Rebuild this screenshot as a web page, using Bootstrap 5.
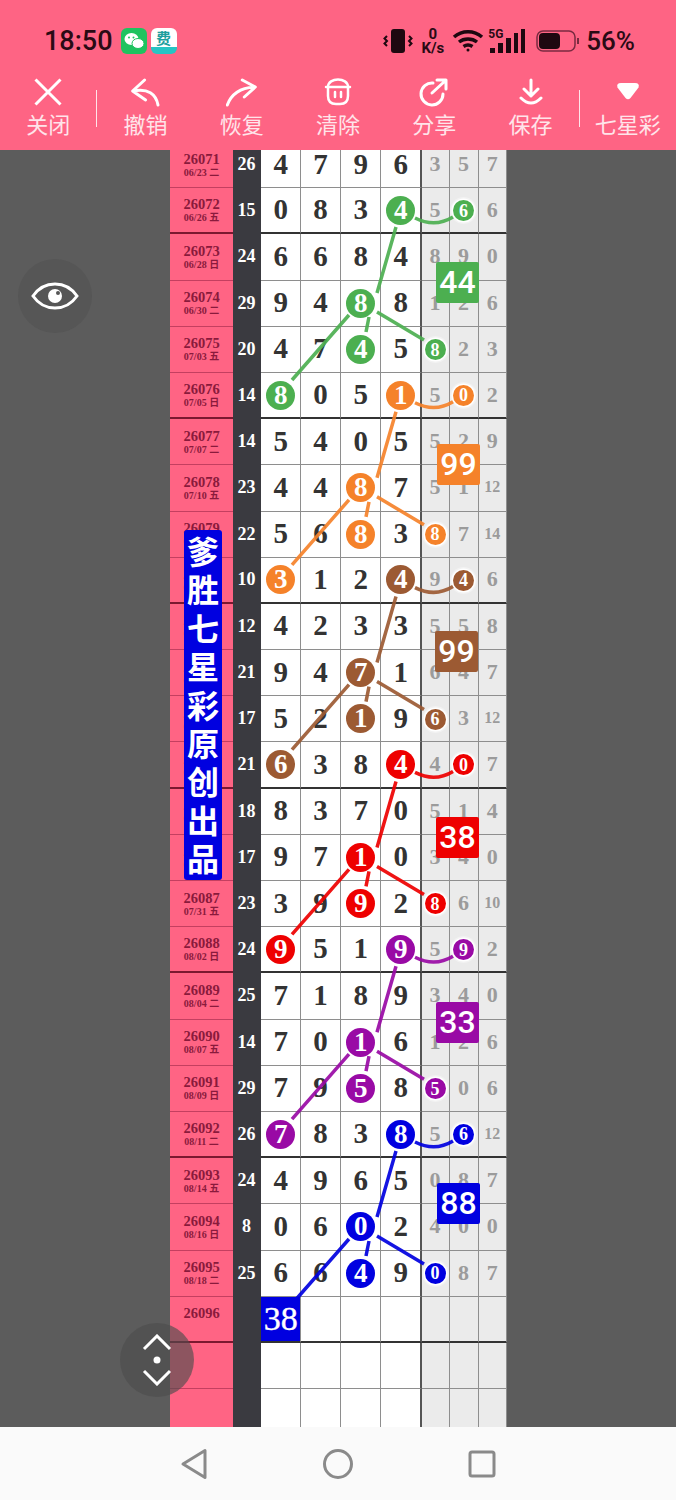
<!DOCTYPE html>
<html lang="zh">
<head>
<meta charset="utf-8">
<title>七星彩</title>
<link href="https://cdn.jsdelivr.net/npm/bootstrap@5.3.0/dist/css/bootstrap.min.css" rel="stylesheet">
<style>
body{background:#5c5c5c;font-family:"Liberation Serif","Noto Sans CJK SC",serif}
.app-shell{height:1500px;overflow:hidden}
.app-head{background:#fe6484;height:150px;font-family:Roboto,"Noto Sans CJK SC",sans-serif}
.status-row{height:72px;padding:10px 41px 0 44px;color:#2a0a14}
.clock{font-size:27px;font-weight:500;line-height:1}
.pct{font-size:26px;font-weight:500;line-height:1;margin-left:6px}
.app-chip{width:26px;height:26px;border-radius:6px;overflow:hidden}
.chip-wx{background:#1fc35f}
.chip-fee{background:linear-gradient(#fff 0,#fff 72%,#27c4c4 72%);color:#1f9e9e;font:700 15px/20px "Noto Sans CJK SC",sans-serif;text-align:center}
.net-rate{font-size:15px;font-weight:700;line-height:14px;text-align:center}
.sig-5g{font-size:12px;font-weight:700;line-height:1}
.batt{margin-left:10px}
.tool-item{flex:1 1 0;color:#ffe4ea;font-size:22px;line-height:28px;min-width:0}
.tool-item svg{display:block;margin-top:4px;margin-bottom:4px}
.tool-sep{width:1px;height:37px;background:#ffe4ea;margin-top:18px}
.draw-wrap{width:337px;margin-top:-8px;margin-left:170px}
.draw-table.table{--bs-table-bg:#fff;table-layout:fixed;width:337px;border-collapse:separate;border-spacing:0}
.draw-table.table>tbody>tr>*{height:46.2px;padding:0 0 1px;text-align:center;vertical-align:middle;border:0;border-bottom:1px solid #8e8e8e;border-right:1px solid #8e8e8e;background:#fff;box-shadow:none;color:#333;font-weight:700;font-size:29px;line-height:1}
.draw-table.table>tbody>tr>td:nth-child(n+3):nth-child(-n+6){padding-left:1px}
.draw-table.table>tbody>tr>th{background:#ff6484;border-bottom-color:#c43f60;border-right:0;color:#8a1a3c;font-size:14.5px;line-height:14px;padding:1px 0 0}
.draw-table.table>tbody>tr>th small{display:block;font-size:10px;line-height:12px;margin-top:1px;color:#8a1a3c}
.draw-table.table>tbody>tr>td:nth-child(2){background:#3a3a40;border-color:#3a3a40;color:#fff;font-size:18px}
.draw-table.table>tbody>tr>td:nth-child(6){border-right:2px solid #555}
.draw-table.table>tbody>tr>td:nth-child(n+7){background:#ebebeb;color:#9b9b9b;font-size:22px;border-right:1px solid #8e8e8e}
.draw-table.table>tbody>tr.grp-end>*{border-bottom:2px solid #333}
.draw-table.table>tbody>tr.grp-end>th{border-bottom-color:#7c1830}
.draw-table.table>tbody>tr.grp-end>td:nth-child(2){border-bottom-color:#3a3a40}
.draw-table.table>tbody>tr>td.nw{font-size:16px}
.draw-table.table>tbody>tr>td.hit{background:#0000e0;color:#fff;font-weight:400;font-size:34px;padding:0;-webkit-text-stroke:.4px #fff}
.orb{display:inline-flex;align-items:center;justify-content:center;width:29px;height:29px;border-radius:50%;background:var(--c);color:#fff;font-size:27px;box-shadow:0 0 0 1.5px #fff,0 0 0 3px rgba(255,255,255,.35)}
.orb-sm{width:21px;height:21px;font-size:18px}
.tone-g{--c:#4caf50}.tone-o{--c:#f5822a}.tone-b{--c:#9c5a33}.tone-r{--c:#ee0000}.tone-p{--c:#990aa5}.tone-u{--c:#0000e0}
.draw-svg{position:absolute;left:0;top:0;pointer-events:none;overflow:visible}
.tag-box{position:absolute;width:43px;height:41px;border-radius:2px;background:var(--c);color:#fff;font:500 32px/41px Roboto,sans-serif;text-align:center}
.tag1{left:266px;top:120px}.tag2{left:267px;top:302px}.tag3{left:265px;top:489px}.tag4{left:266px;top:675px}.tag5{left:266px;top:860px}.tag6{left:267px;top:1041px}
.side-banner{position:absolute;left:14px;top:388px;width:38px;height:350px;background:#0000e0;border-radius:3px;color:#fff;font:700 32px/38.4px "Noto Sans CJK SC",sans-serif;padding:1px 3px;text-align:center}
.fab{position:absolute;width:74px;height:74px;border-radius:50%}
.fab-eye{left:18px;top:259px;background:#565656}
.fab-scroll{left:120px;top:1323px;background:rgba(76,76,76,.64)}
.sys-nav{height:73px;background:#fafafa;gap:112px}
</style>
</head>
<body>
<div class="app-shell d-flex flex-column position-relative">
<header class="app-head flex-shrink-0">
  <div class="status-row d-flex align-items-center">
    <span class="clock">18:50</span>
    <span class="app-chip chip-wx ms-2 d-block"><svg width="26" height="26" viewBox="0 0 26 26"><ellipse cx="10.5" cy="11" rx="7" ry="6" fill="#fff"/><ellipse cx="17" cy="15.5" rx="6" ry="5" fill="#fff" stroke="#1fc35f"/><circle cx="8" cy="9.5" r="1" fill="#1fc35f"/><circle cx="12.5" cy="9.5" r="1" fill="#1fc35f"/></svg></span>
    <span class="app-chip chip-fee ms-1 d-block">费</span>
    <div class="ms-auto d-flex align-items-center">
      <svg width="30" height="26" viewBox="0 0 30 26" fill="none" stroke="#1e0810" stroke-width="2"><rect x="8" y="1" width="14" height="24" rx="3" fill="#1e0810" stroke="none"/><path d="M4 8l-2.500 2.500 2.500 2.500-2.500 2.500 2.500 2.500M26 8l2.500 2.500-2.500 2.500 2.500 2.500-2.500 2.500"/></svg>
      <div class="net-rate ms-2">0<br>K/s</div>
      <svg class="ms-2" width="32" height="24" viewBox="0 0 32 24" fill="none" stroke="#1e0810" stroke-width="3.500"><path d="M2 8c8-7 20-7 28 0M7 13c5-4 13-4 18 0M11.500 17.500c3-2 6-2 9 0"/><circle cx="16" cy="21" r="1.500" fill="#1e0810" stroke="none"/></svg>
      <div class="position-relative ms-1">
        <svg class="d-block" width="38" height="26" viewBox="0 0 38 26" fill="#1e0810"><rect x="2" y="20" width="5" height="5"/><rect x="10" y="15" width="5" height="10"/><rect x="18" y="10" width="5" height="15"/><rect x="26" y="5" width="4" height="20"/><rect x="33" y="1" width="4" height="24"/></svg>
        <span class="sig-5g position-absolute top-0 start-0">5G</span>
      </div>
      <svg class="batt" width="44" height="22" viewBox="0 0 44 22" fill="none"><rect x="1" y="1" width="38" height="20" rx="6" stroke="#7a2a40" stroke-width="1.500"/><rect x="3" y="3" width="21" height="16" rx="4" fill="#1e0810"/><path d="M42 8v6" stroke="#7a2a40" stroke-width="2"/></svg>
      <span class="pct">56%</span>
    </div>
  </div>
  <nav class="d-flex align-items-start">
    <div class="tool-item d-flex flex-column align-items-center"><svg width="32" height="32" viewBox="0 0 32 32" fill="none" stroke="#fff" stroke-width="3"><path d="M3.500 3.500l25 25M28.500 3.500l-25 25"/></svg><span>关闭</span></div>
    <div class="tool-sep"></div>
    <div class="tool-item d-flex flex-column align-items-center"><svg width="32" height="32" viewBox="0 0 32 32" fill="none" stroke="#fff" stroke-width="3" stroke-linecap="round" stroke-linejoin="round"><path d="M15.600 4L3.600 15l13 9M4 15c15-3 23 3 25 14"/></svg><span>撤销</span></div>
    <div class="tool-item d-flex flex-column align-items-center"><svg width="32" height="32" viewBox="0 0 32 32" fill="none" stroke="#fff" stroke-width="3" stroke-linecap="round" stroke-linejoin="round"><path d="M16.300 4l13 7-11 10M1.300 29C5 19 14 12 28 11"/></svg><span>恢复</span></div>
    <div class="tool-item d-flex flex-column align-items-center"><svg width="32" height="32" viewBox="0 0 32 32" fill="none" stroke="#fff" stroke-width="2.500" stroke-linecap="round"><path d="M6 11C6 1 26 1 26 11"/><path d="M4 11H28"/><path d="M6 11V20Q6 28 14 28H18Q26 28 26 20V11"/><path d="M13 16v5M19 16v5"/></svg><span>清除</span></div>
    <div class="tool-item d-flex flex-column align-items-center"><svg width="32" height="32" viewBox="0 0 32 32" fill="none" stroke="#fff" stroke-width="3" stroke-linecap="round" stroke-linejoin="round"><path d="M15 7A11 11 0 1 0 25 18M14 17L27 5M19 4h9v9"/></svg><span>分享</span></div>
    <div class="tool-item d-flex flex-column align-items-center"><svg width="32" height="32" viewBox="0 0 32 32" fill="none" stroke="#fff" stroke-width="3" stroke-linecap="round" stroke-linejoin="round"><path d="M16 4v16M9 13l7 7 7-7M6 22q10 10 20 0"/></svg><span>保存</span></div>
    <div class="tool-sep"></div>
    <div class="tool-item d-flex flex-column align-items-center"><svg width="32" height="32" viewBox="0 0 32 32" fill="#fff"><path d="M9 7h14q5 0 3.500 4.500L18.500 22q-2.500 2.500-5 0L5.500 11.500Q4 7 9 7z"/></svg><span>七星彩</span></div>
  </nav>
</header>
<main class="flex-grow-1 overflow-hidden">
  <div class="draw-wrap position-relative">
  <table class="table mb-0 draw-table">
    <colgroup><col style="width:63px"><col style="width:28px"><col style="width:39.5px"><col style="width:40px"><col style="width:40.5px"><col style="width:40.5px"><col style="width:28px"><col style="width:29px"><col style="width:28.5px"></colgroup>
    <tbody>
    <tr><th>26071<small>06/23 二</small></th><td>26</td><td>4</td><td>7</td><td>9</td><td>6</td><td>3</td><td>5</td><td>7</td></tr>
    <tr class="grp-end"><th>26072<small>06/26 五</small></th><td>15</td><td>0</td><td>8</td><td>3</td><td><span class="orb tone-g">4</span></td><td>5</td><td><span class="orb orb-sm tone-g">6</span></td><td>6</td></tr>
    <tr><th>26073<small>06/28 日</small></th><td>24</td><td>6</td><td>6</td><td>8</td><td>4</td><td>8</td><td>9</td><td>0</td></tr>
    <tr><th>26074<small>06/30 二</small></th><td>29</td><td>9</td><td>4</td><td><span class="orb tone-g">8</span></td><td>8</td><td>1</td><td>2</td><td>6</td></tr>
    <tr><th>26075<small>07/03 五</small></th><td>20</td><td>4</td><td>7</td><td><span class="orb tone-g">4</span></td><td>5</td><td><span class="orb orb-sm tone-g">8</span></td><td>2</td><td>3</td></tr>
    <tr class="grp-end"><th>26076<small>07/05 日</small></th><td>14</td><td><span class="orb tone-g">8</span></td><td>0</td><td>5</td><td><span class="orb tone-o">1</span></td><td>5</td><td><span class="orb orb-sm tone-o">0</span></td><td>2</td></tr>
    <tr><th>26077<small>07/07 二</small></th><td>14</td><td>5</td><td>4</td><td>0</td><td>5</td><td>5</td><td>2</td><td>9</td></tr>
    <tr><th>26078<small>07/10 五</small></th><td>23</td><td>4</td><td>4</td><td><span class="orb tone-o">8</span></td><td>7</td><td>5</td><td>1</td><td class="nw">12</td></tr>
    <tr><th>26079<small>07/12 日</small></th><td>22</td><td>5</td><td>6</td><td><span class="orb tone-o">8</span></td><td>3</td><td><span class="orb orb-sm tone-o">8</span></td><td>7</td><td class="nw">14</td></tr>
    <tr class="grp-end"><th>26080<small>07/14 二</small></th><td>10</td><td><span class="orb tone-o">3</span></td><td>1</td><td>2</td><td><span class="orb tone-b">4</span></td><td>9</td><td><span class="orb orb-sm tone-b">4</span></td><td>6</td></tr>
    <tr><th>26081<small>07/17 五</small></th><td>12</td><td>4</td><td>2</td><td>3</td><td>3</td><td>5</td><td>5</td><td>8</td></tr>
    <tr><th>26082<small>07/19 日</small></th><td>21</td><td>9</td><td>4</td><td><span class="orb tone-b">7</span></td><td>1</td><td>6</td><td>4</td><td>7</td></tr>
    <tr><th>26083<small>07/21 二</small></th><td>17</td><td>5</td><td>2</td><td><span class="orb tone-b">1</span></td><td>9</td><td><span class="orb orb-sm tone-b">6</span></td><td>3</td><td class="nw">12</td></tr>
    <tr class="grp-end"><th>26084<small>07/24 五</small></th><td>21</td><td><span class="orb tone-b">6</span></td><td>3</td><td>8</td><td><span class="orb tone-r">4</span></td><td>4</td><td><span class="orb orb-sm tone-r">0</span></td><td>7</td></tr>
    <tr><th>26085<small>07/26 日</small></th><td>18</td><td>8</td><td>3</td><td>7</td><td>0</td><td>5</td><td>1</td><td>4</td></tr>
    <tr><th>26086<small>07/28 二</small></th><td>17</td><td>9</td><td>7</td><td><span class="orb tone-r">1</span></td><td>0</td><td>3</td><td>4</td><td>0</td></tr>
    <tr><th>26087<small>07/31 五</small></th><td>23</td><td>3</td><td>9</td><td><span class="orb tone-r">9</span></td><td>2</td><td><span class="orb orb-sm tone-r">8</span></td><td>6</td><td class="nw">10</td></tr>
    <tr class="grp-end"><th>26088<small>08/02 日</small></th><td>24</td><td><span class="orb tone-r">9</span></td><td>5</td><td>1</td><td><span class="orb tone-p">9</span></td><td>5</td><td><span class="orb orb-sm tone-p">9</span></td><td>2</td></tr>
    <tr><th>26089<small>08/04 二</small></th><td>25</td><td>7</td><td>1</td><td>8</td><td>9</td><td>3</td><td>4</td><td>0</td></tr>
    <tr><th>26090<small>08/07 五</small></th><td>14</td><td>7</td><td>0</td><td><span class="orb tone-p">1</span></td><td>6</td><td>1</td><td>2</td><td>6</td></tr>
    <tr><th>26091<small>08/09 日</small></th><td>29</td><td>7</td><td>9</td><td><span class="orb tone-p">5</span></td><td>8</td><td><span class="orb orb-sm tone-p">5</span></td><td>0</td><td>6</td></tr>
    <tr class="grp-end"><th>26092<small>08/11 二</small></th><td>26</td><td><span class="orb tone-p">7</span></td><td>8</td><td>3</td><td><span class="orb tone-u">8</span></td><td>5</td><td><span class="orb orb-sm tone-u">6</span></td><td class="nw">12</td></tr>
    <tr><th>26093<small>08/14 五</small></th><td>24</td><td>4</td><td>9</td><td>6</td><td>5</td><td>0</td><td>8</td><td>7</td></tr>
    <tr><th>26094<small>08/16 日</small></th><td>8</td><td>0</td><td>6</td><td><span class="orb tone-u">0</span></td><td>2</td><td>4</td><td>0</td><td>0</td></tr>
    <tr><th>26095<small>08/18 二</small></th><td>25</td><td>6</td><td>6</td><td><span class="orb tone-u">4</span></td><td>9</td><td><span class="orb orb-sm tone-u">0</span></td><td>8</td><td>7</td></tr>
    <tr class="grp-end"><th>26096<small>&nbsp;</small></th><td></td><td class="hit">38</td><td></td><td></td><td></td><td></td><td></td><td></td></tr>
    <tr><th></th><td></td><td></td><td></td><td></td><td></td><td></td><td></td><td></td></tr>
    <tr><th></th><td></td><td></td><td></td><td></td><td></td><td></td><td></td><td></td></tr>
    </tbody>
  </table>
  <svg class="draw-svg" width="337" height="1294" viewBox="170 142 337 1294" fill="none" stroke-width="3.500" stroke-opacity=".92">
    <defs><g id="trace"><path d="M396 227L377 293M349 315L292 380M377 312L424 340M369 317L366 332M415 218Q435 228 453 217"/></g></defs>
    <use href="#trace" stroke="#4caf50"/>
    <use href="#trace" y="184.800" stroke="#f5822a"/>
    <use href="#trace" y="369.600" stroke="#9c5a33"/>
    <use href="#trace" y="554.400" stroke="#ee0000"/>
    <use href="#trace" y="739.200" stroke="#990aa5"/>
    <use href="#trace" y="924" stroke="#0000e0"/>
  </svg>
  <div class="tag-box tag1 tone-g">44</div>
  <div class="tag-box tag2 tone-o">99</div>
  <div class="tag-box tag3 tone-b">99</div>
  <div class="tag-box tag4 tone-r">38</div>
  <div class="tag-box tag5 tone-p">33</div>
  <div class="tag-box tag6 tone-u">88</div>
  <div class="side-banner">爹胜七星彩原创出品</div>
  </div>
</main>
<footer class="sys-nav flex-shrink-0 d-flex justify-content-center align-items-center">
  <svg width="32" height="32" viewBox="0 0 32 32" fill="none" stroke="#8a8a8a" stroke-width="3" stroke-linejoin="round"><path d="M27 2.500v27L5 16z"/></svg>
  <svg width="32" height="32" viewBox="0 0 32 32" fill="none" stroke="#8a8a8a" stroke-width="3"><circle cx="16" cy="16" r="13.500"/></svg>
  <svg width="32" height="32" viewBox="0 0 32 32" fill="none" stroke="#8a8a8a" stroke-width="3"><rect x="4" y="4" width="24" height="24" rx="2"/></svg>
</footer>
<div class="fab fab-eye d-flex align-items-center justify-content-center"><svg width="48" height="34" viewBox="0 0 48 34" fill="none" stroke="#fff" stroke-width="3"><path d="M2 17C13 1 35 1 46 17C35 33 13 33 2 17z"/><circle cx="24" cy="17" r="7" fill="#fff" stroke="none"/><circle cx="27" cy="14" r="2" fill="#565656" stroke="none"/></svg></div>
<div class="fab fab-scroll d-flex align-items-center justify-content-center"><svg width="34" height="52" viewBox="0 0 34 52" fill="none" stroke="#fff" stroke-width="3"><path d="M4 15L17 2L30 15M4 37L17 50L30 37"/><circle cx="17" cy="26" r="3.500" fill="#fff" stroke="none"/></svg></div>
</div>
<script src="https://cdn.jsdelivr.net/npm/bootstrap@5.3.0/dist/js/bootstrap.bundle.min.js"></script>
</body>
</html>
